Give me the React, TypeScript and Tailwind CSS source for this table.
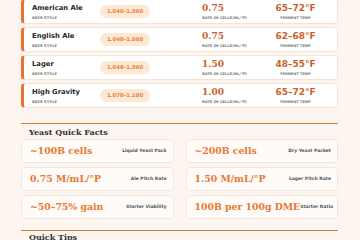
const styles = [
  { name: "American Ale", og: "1.040–1.060", rate: "0.75", temp: "65–72°F" },
  { name: "English Ale", og: "1.040–1.060", rate: "0.75", temp: "62–68°F" },
  { name: "Lager", og: "1.048–1.060", rate: "1.50", temp: "48–55°F" },
  { name: "High Gravity", og: "1.070–1.100", rate: "1.00", temp: "65–72°F" },
];

const facts = [
  { value: "~100B cells", label: "Liquid Yeast Pack" },
  { value: "~200B cells", label: "Dry Yeast Packet" },
  { value: "0.75 M/mL/°P", label: "Ale Pitch Rate" },
  { value: "1.50 M/mL/°P", label: "Lager Pitch Rate" },
  { value: "~50–75% gain", label: "Starter Viability" },
  { value: "100B per 100g DME", label: "Starter Ratio" },
];

const serif = "font-['DejaVu_Serif',serif]";

function StyleRow({ s }: { s: (typeof styles)[number] }) {
  return (
    <div className="flex h-[25px] items-center rounded-[4px] border border-[#f5e4d6] border-l-[3px] border-l-[#e8732a] bg-white pl-2">
      <div className="w-[68px]">
        <div className="text-[6.8px] font-bold leading-[9px] text-[#2a2a2a]">{s.name}</div>
        <div className="mt-[3px] text-[3.6px] font-bold uppercase leading-[4px] tracking-wide text-[#777]">
          Beer Style
        </div>
      </div>
      <div className="flex h-[13px] w-[50px] items-center justify-center rounded-full bg-[#fde8d4] text-[5.3px] font-bold text-[#e8803a]">
        {s.og}
      </div>
      <div className="ml-[52px] w-[64px]">
        <div className={`${serif} text-[9px] font-bold leading-[10px] text-[#c9622a]`}>{s.rate}</div>
        <div className="mt-[3px] text-[3.6px] font-bold uppercase leading-[4px] text-[#777]">
          Rate (M cells/mL/°P)
        </div>
      </div>
      <div className="flex w-[59px] flex-col items-center">
        <div className="text-[9px] font-bold leading-[10px] text-[#c9622a]">{s.temp}</div>
        <div className="mt-[3px] text-[3.5px] font-bold uppercase leading-[4px] text-[#777]">
          Ferment Temp
        </div>
      </div>
    </div>
  );
}

export default function App() {
  return (
    <div className="h-[240px] w-[360px] overflow-hidden bg-[#fdf6f0] font-['DejaVu_Sans',sans-serif]">
      <div className="-mt-px ml-[21px] w-[317px]">
        <div className="flex flex-col gap-[3px]">
          {styles.map((s) => (
            <StyleRow key={s.name} s={s} />
          ))}
        </div>

        <div className="mt-[15px] border-t border-[#e07a30] pt-[3px]">
          <h2 className={`${serif} pl-2 text-[8px] font-bold leading-[10px] text-[#333]`}>
            Yeast Quick Facts
          </h2>
          <div className="mt-[2px] grid grid-cols-2 gap-x-[12px] gap-y-[4px]">
            {facts.map((f) => (
              <div
                key={f.label}
                className="flex h-[24px] items-center justify-between rounded-[4px] border border-[#f5e6da] bg-[#fffbf8] pl-2 pr-[6px]"
              >
                <span className={`${serif} shrink-0 whitespace-nowrap text-[9.3px] font-bold text-[#e8782e]`}>
                  {f.value}
                </span>
                <span className="whitespace-nowrap text-[4.5px] font-bold text-[#555]">{f.label}</span>
              </div>
            ))}
          </div>
        </div>

        <div className="mt-[11px] border-t border-[#e07a30] pt-[1px]">
          <h2 className={`${serif} pl-2 text-[8px] font-bold leading-[10px] text-[#333]`}>Quick Tips</h2>
        </div>
      </div>
    </div>
  );
}
